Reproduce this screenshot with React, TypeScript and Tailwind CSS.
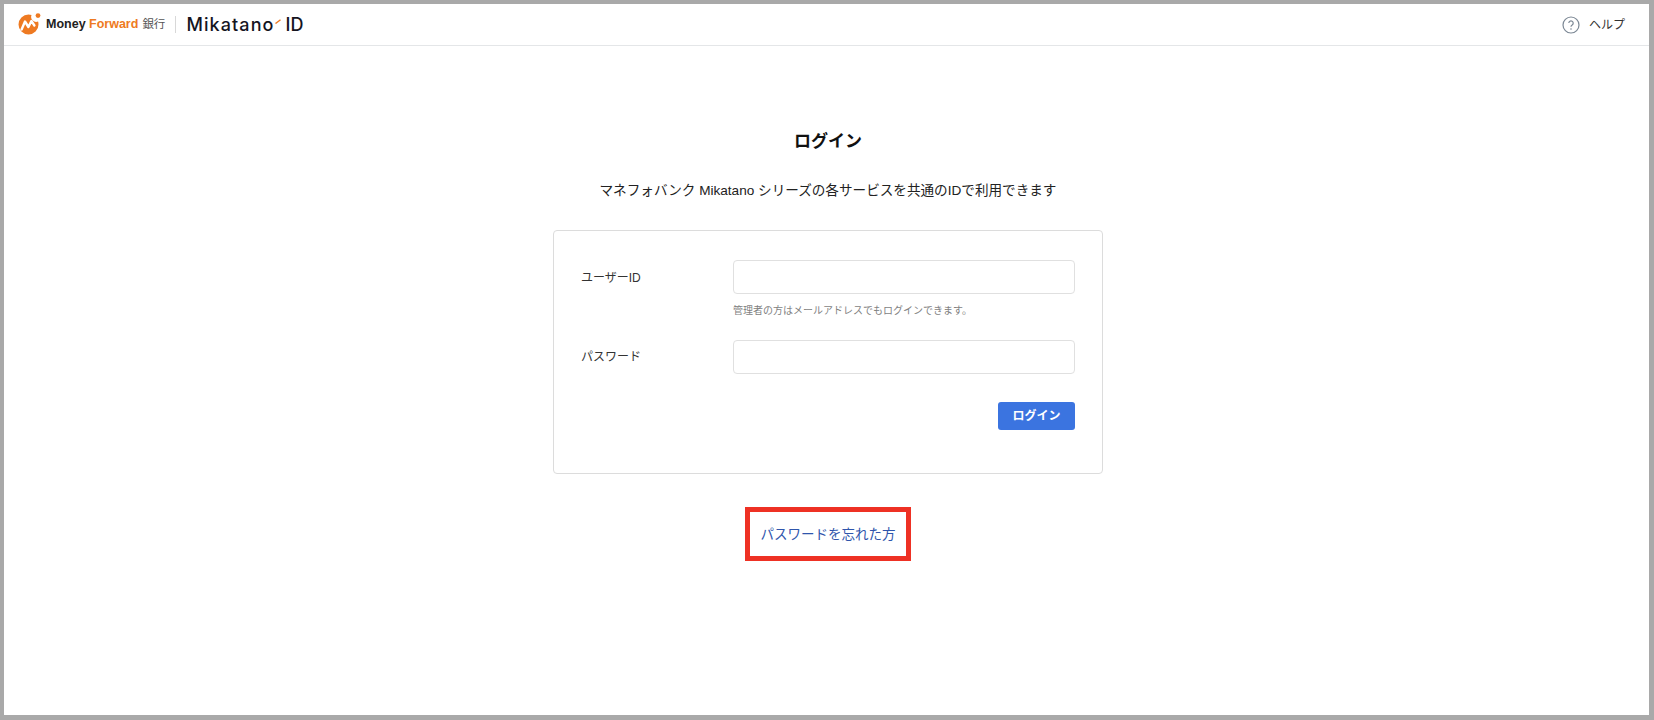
export default function App() {
  return (
    <div className="box-border h-[720px] w-[1654px] overflow-hidden border-t-4 border-r-[5px] border-b-[5px] border-l-[4px] border-[#a9a9a9] bg-white font-['Liberation_Sans','Noto_Sans_CJK_JP',sans-serif] text-[#1a1a1a]">
      <header className="flex h-[42px] items-center justify-between border-b border-[#e4e6e8] pl-[14px] pr-[24px]">
        <div className="flex items-center">
          <svg width="24" height="23" viewBox="0 0 24 23" className="mb-[3px]">
            <path d="M10.5 2.5a10 10 0 1 0 10 10c0-1-.1-2-.4-3a5 5 0 0 1-6.6-6.4 10 10 0 0 0-3-.6z" fill="#ee7a22" />
            <circle cx="20" cy="3.6" r="2.4" fill="#ee7a22" />
            <path d="M3.6 17.5 7 9.5l3.4 5.5 3-6 3 4.5" fill="none" stroke="#fff" strokeWidth="2.4" strokeLinejoin="round" strokeLinecap="round" />
          </svg>
          <span className="ml-[4px] text-[12.5px] font-bold tracking-[0px] text-[#222]">Money <span className="text-[#ee7a22]">Forward</span></span>
          <span className="ml-[4px] text-[11.5px] text-[#555]">銀行</span>
          <span className="ml-[10px] h-[17px] w-px bg-[#d8d8d8]" />
          <span className="ml-[10px] font-['Inter',sans-serif] text-[18px] font-medium tracking-[1.1px] text-[#15151f]">Mikatano</span>
          <svg width="6" height="5" viewBox="0 0 6 5" className="mb-[6px]"><path d="M0.5 4.5 5.5 0.8" stroke="#ee7a22" strokeWidth="1.4" fill="none" /></svg>
          <span className="ml-[5px] font-['Inter',sans-serif] text-[18px] font-medium text-[#15151f]">ID</span>
        </div>
        <div className="flex items-center">
          <svg width="18" height="18" viewBox="0 0 18 18">
            <circle cx="9" cy="9" r="8" fill="none" stroke="#7b8794" strokeWidth="1.2" />
            <path d="M6.8 7.1a2.2 2.2 0 1 1 3.4 1.9c-.8.5-1.2.9-1.2 1.8" fill="none" stroke="#7b8794" strokeWidth="1.2" />
            <circle cx="9" cy="13" r=".8" fill="#7b8794" />
          </svg>
          <span className="ml-[9px] text-[12px] text-[#333]">ヘルプ</span>
        </div>
      </header>

      <main className="flex flex-col items-center pl-[3px]">
        <h1 className="mt-[84px] text-[17px] leading-[24px] font-bold text-[#111]">ログイン</h1>
        <p className="mt-[27px] text-[13.6px] leading-[20px] text-[#222]">マネフォバンク Mikatano シリーズの各サービスを共通のIDで利用できます</p>
        <section className="mt-[29px] box-border h-[244px] w-[550px] rounded-[4px] border border-[#dcdcdc] px-[27px] pt-[29px]">
          <div className="flex">
            <label className="mt-[9px] w-[152px] text-[12px] leading-[18px] text-[#333]">ユーザーID</label>
            <div>
              <div className="box-border h-[34px] w-[342px] rounded-[4px] border border-[#e0e0e0]" />
              <p className="mt-[9px] text-[10px] leading-[15px] text-[#7f7f7f]">管理者の方はメールアドレスでもログインできます。</p>
            </div>
          </div>
          <div className="mt-[22px] flex">
            <label className="mt-[8px] w-[152px] text-[12px] leading-[18px] text-[#333]">パスワード</label>
            <div className="box-border h-[34px] w-[342px] rounded-[4px] border border-[#e0e0e0]" />
          </div>
          <div className="mt-[28px] flex justify-end">
            <button className="h-[28px] w-[77px] rounded-[3px] bg-[#3b74e0] text-[12px] font-bold text-white">ログイン</button>
          </div>
        </section>
        <div className="mt-[33px] box-border flex h-[54px] w-[166px] items-center justify-center border-[5px] border-[#ee3124] pt-[2px]">
          <a className="text-[13.5px] text-[#2f55ac]">パスワードを忘れた方</a>
        </div>
      </main>
    </div>
  );
}
